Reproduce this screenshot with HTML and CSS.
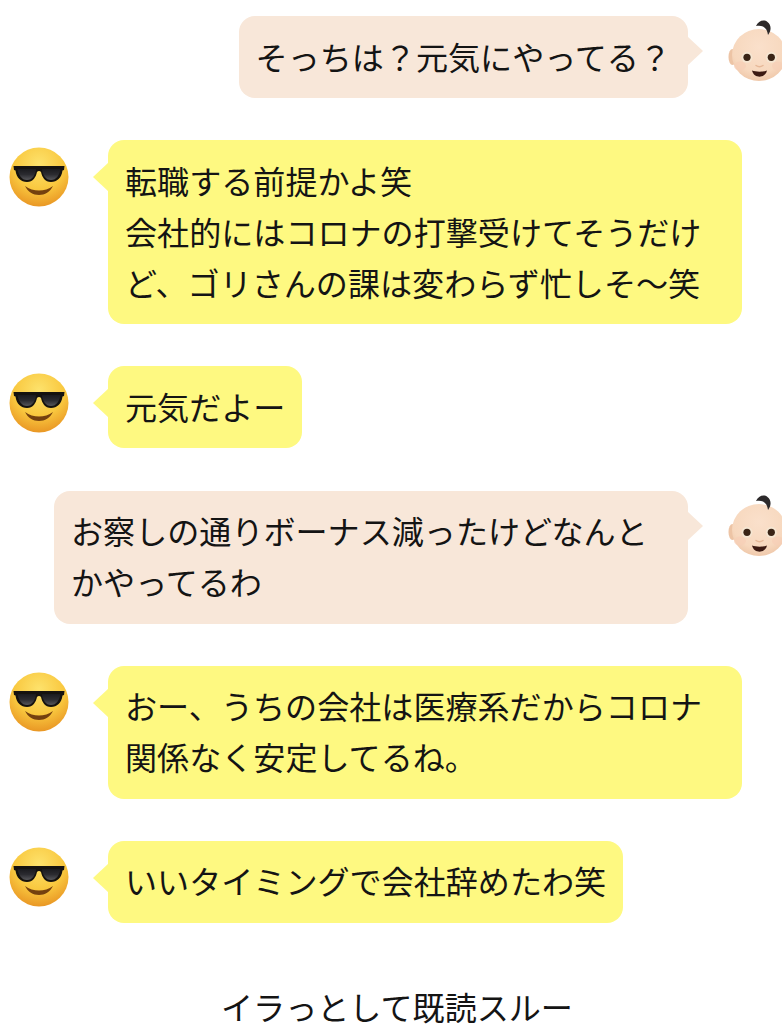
FILE: index.html
```html
<!DOCTYPE html>
<html lang="ja">
<head>
    <meta charset="utf-8">
    <meta name="viewport" content="width=device-width, initial-scale=1.0">
    <title>トーク</title>
    <link rel="stylesheet" href="styles.css">
</head>
<body>
    <svg class="defs" width="0" height="0">
        <defs>
            <radialGradient id="cool-skin" cx="50%" cy="28%" r="78%">
                <stop offset="0" stop-color="#fde26c"/>
                <stop offset="0.55" stop-color="#f9c83f"/>
                <stop offset="1" stop-color="#e68d1f"/>
            </radialGradient>
            <linearGradient id="cool-lens" x1="0" y1="0" x2="0" y2="1">
                <stop offset="0" stop-color="#1a1a1e"/>
                <stop offset="0.5" stop-color="#2b2b30"/>
                <stop offset="1" stop-color="#56565a"/>
            </linearGradient>
            <radialGradient id="baby-skin" cx="50%" cy="35%" r="70%">
                <stop offset="0" stop-color="#fae0cb"/>
                <stop offset="0.7" stop-color="#f7d8be"/>
                <stop offset="1" stop-color="#edc4a5"/>
            </radialGradient>
            <symbol id="cool" viewBox="0 0 60 60">
                <circle cx="30" cy="30" r="29.500" fill="url(#cool-skin)"/>
                <path d="M4.500 19 L55.500 19 L55 23 L53.500 23.500 C52.500 31 48 35 42 35 C36 35 33 30 32 25 C31 23.800 29 23.800 28 25 C27 30 24 35 18 35 C12 35 7.500 31 6.500 23.500 L5 23 Z" fill="#15120f"/>
                <path d="M8.500 22 L27 22 C26.500 28 23.500 33 18 33 C12.500 33 9.500 28 8.500 22 Z" fill="url(#cool-lens)"/>
                <path d="M33 22 L51.500 22 C50.500 28 47.500 33 42 33 C36.500 33 33.500 28 33 22 Z" fill="url(#cool-lens)"/>
                <path d="M16 39 C24 45 36 45 44 39 C41 45 36 48 30 48 C24 48 19 45 16 39 Z" fill="#74400f"/>
            </symbol>
            <symbol id="baby" viewBox="0 0 54 64">
                <ellipse cx="4.500" cy="37" rx="4" ry="8" fill="#edc4a5"/>
                <ellipse cx="31" cy="35" rx="27" ry="26" fill="url(#baby-skin)"/>
                <ellipse cx="12" cy="46" rx="6" ry="4.500" fill="#f6cfb6" opacity="0.7"/>
                <ellipse cx="50" cy="46" rx="6" ry="4.500" fill="#f6cfb6" opacity="0.7"/>
                <path d="M28 6 C30 1 36 -1 39.500 2 C43.500 5 43.500 11 40 15 C39.500 11 38 8 35 6.500 C33 5.500 30 5.500 28 6 Z" fill="#2d2a2b"/>
                <circle cx="19" cy="37.300" r="5.500" fill="#f5e6d2"/>
                <circle cx="19" cy="37.300" r="3.600" fill="#3a2416"/>
                <circle cx="43.300" cy="37.300" r="5.500" fill="#f5e6d2"/>
                <circle cx="43.300" cy="37.300" r="3.600" fill="#3a2416"/>
                <path d="M28 45.500 C30 47 33 47 35 45.500" fill="none" stroke="#e6b898" stroke-width="1.400" stroke-linecap="round"/>
                <path d="M24 50.500 C28 52 35 52 39 50.500 C38 55 34.500 56.700 31.500 56.700 C28.500 56.700 25 55 24 50.500 Z" fill="#3c1a12"/>
            </symbol>
        </defs>
    </svg>

    <div class="talk">
        <div class="row me">
            <div class="bubble pink">そっちは？元気にやってる？</div>
            <svg class="baby"><use href="#baby"/></svg>
        </div>
        <div class="row">
            <svg class="cool"><use href="#cool"/></svg>
            <div class="bubble yellow">転職する前提かよ笑<br>会社的にはコロナの打撃受けてそうだけど、ゴリさんの課は変わらず忙しそ〜笑</div>
        </div>
        <div class="row">
            <svg class="cool"><use href="#cool"/></svg>
            <div class="bubble yellow">元気だよー</div>
        </div>
        <div class="row me">
            <div class="bubble pink">お察しの通りボーナス減ったけどなんとかやってるわ</div>
            <svg class="baby"><use href="#baby"/></svg>
        </div>
        <div class="row">
            <svg class="cool"><use href="#cool"/></svg>
            <div class="bubble yellow">おー、うちの会社は医療系だからコロナ関係なく安定してるね。</div>
        </div>
        <div class="row">
            <svg class="cool"><use href="#cool"/></svg>
            <div class="bubble yellow">いいタイミングで会社辞めたわ笑</div>
        </div>
    </div>

    <p class="caption">イラっとして既読スルー</p>
</body>
</html>
```

FILE: styles.css
```css
html,
body {
    margin: 0;
    padding: 0;
    background-color: #fff;
}

body {
    width: 782px;
    min-height: 1024px;
    font-family: "Noto Sans CJK JP", "Noto Sans", sans-serif;
    font-size: 32.1px;
    color: #141414;
}

.defs {
    display: block;
    height: 0;
}

.talk {
    display: flex;
    flex-direction: column;
    gap: 42.2px;
    padding-top: 16px;
}

.row {
    display: flex;
    align-items: flex-start;
    padding-left: 9px;
    gap: 39px;
}

.row.me {
    justify-content: flex-end;
    padding-left: 0;
    gap: 40px;
}

.bubble {
    position: relative;
    box-sizing: border-box;
    max-width: 634px;
    padding: 14.5px 17px 16.5px;
    border-radius: 16px;
    line-height: 51px;
    line-break: strict;
}

.bubble::before {
    content: "";
    position: absolute;
    top: 22px;
    width: 0;
    height: 0;
    border-top: 15px solid transparent;
    border-bottom: 15px solid transparent;
}

.yellow {
    background-color: #fef981;
}

.yellow::before {
    left: -15px;
    border-right: 16px solid #fef981;
}

.pink {
    background-color: #f8e7d9;
}

.pink::before {
    right: -15px;
    top: 20px;
    border-left: 16px solid #f8e7d9;
}

.cool {
    flex: none;
    width: 60px;
    height: 60px;
    margin-top: 6.5px;
}

.baby {
    flex: none;
    width: 54px;
    height: 64px;
    margin-top: 4px;
}

.caption {
    margin: 67px 0 0;
    padding-left: 12px;
    line-height: 32px;
    text-align: center;
}
```
